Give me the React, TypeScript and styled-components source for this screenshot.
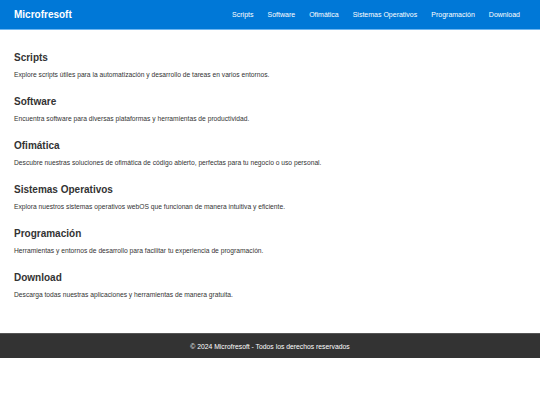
import React from "react";
import styled, { createGlobalStyle } from "styled-components";

const sections = [
  {
    title: "Scripts",
    text: "Explore scripts útiles para la automatización y desarrollo de tareas en varios entornos.",
  },
  {
    title: "Software",
    text: "Encuentra software para diversas plataformas y herramientas de productividad.",
  },
  {
    title: "Ofimática",
    text: "Descubre nuestras soluciones de ofimática de código abierto, perfectas para tu negocio o uso personal.",
  },
  {
    title: "Sistemas Operativos",
    text: "Explora nuestros sistemas operativos webOS que funcionan de manera intuitiva y eficiente.",
  },
  {
    title: "Programación",
    text: "Herramientas y entornos de desarrollo para facilitar tu experiencia de programación.",
  },
  {
    title: "Download",
    text: "Descarga todas nuestras aplicaciones y herramientas de manera gratuita.",
  },
];

const App = () => {
  return (
    <>
      <GlobalStyle />
      <Header>
        <Logo>Microfresoft</Logo>
        <Nav>
          {sections.map((s) => (
            <NavLink key={s.title} href="#">
              {s.title}
            </NavLink>
          ))}
        </Nav>
      </Header>
      <Main>
        {sections.map((s) => (
          <Section key={s.title}>
            <Title>{s.title}</Title>
            <Text>{s.text}</Text>
          </Section>
        ))}
      </Main>
      <Footer>© 2024 Microfresoft - Todos los derechos reservados</Footer>
    </>
  );
};

export default App;

const GlobalStyle = createGlobalStyle`
  body {
    margin: 0;
    background: #ffffff;
    font-family: "Liberation Sans", Arial, sans-serif;
    color: #333333;
  }
`;

const Header = styled.header`
  display: flex;
  justify-content: space-between;
  align-items: center;
  height: 29px;
  padding: 0 20px 0 14px;
  background-color: #0078d7;
  border-bottom: 1.5px solid #6fb6f0;
`;

const Logo = styled.h1`
  margin: 0;
  font-size: 10px;
  font-weight: bold;
  color: #ffffff;
`;

const Nav = styled.nav`
  display: flex;
  gap: 14px;
`;

const NavLink = styled.a`
  color: #ffffff;
  font-size: 7px;
  text-decoration: none;
`;

const Main = styled.main`
  padding: 22px 14px 34px;
`;

const Section = styled.section`
  margin-bottom: 17px;

  &:last-child {
    margin-bottom: 0;
  }
`;

const Title = styled.h2`
  margin: 0 0 7px;
  font-size: 10px;
  line-height: 12px;
  font-weight: bold;
  color: #333333;
`;

const Text = styled.p`
  margin: 0;
  font-size: 6.7px;
  line-height: 8px;
  color: #333333;
`;

const Footer = styled.footer`
  display: flex;
  justify-content: center;
  align-items: center;
  height: 24px;
  background-color: #333333;
  border-top: 1px solid #555555;
  color: #ffffff;
  font-size: 6.8px;
`;
